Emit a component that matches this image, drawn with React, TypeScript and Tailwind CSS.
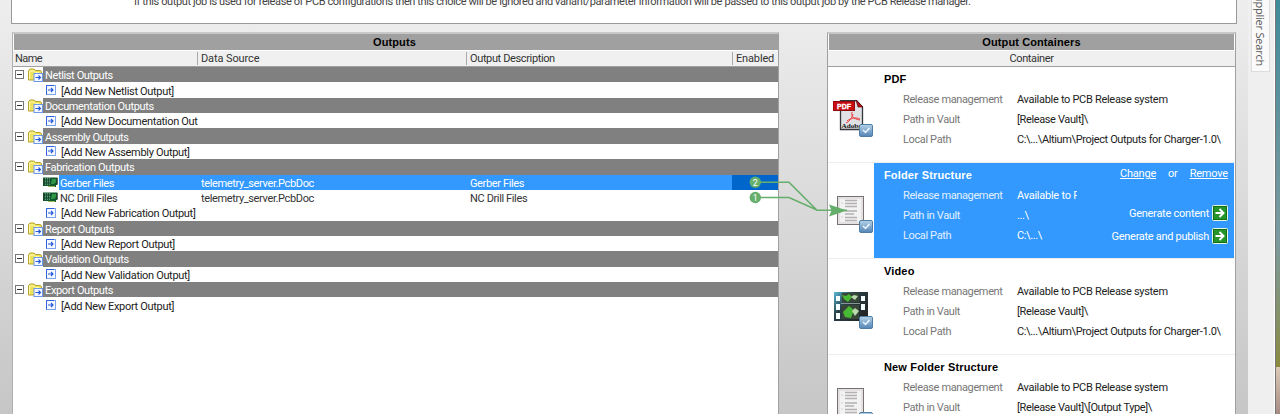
import React from 'react';

const groups = [
  { name: 'Netlist Outputs', add: '[Add New Netlist Output]' },
  { name: 'Documentation Outputs', add: '[Add New Documentation Out' },
  { name: 'Assembly Outputs', add: '[Add New Assembly Output]' },
  { name: 'Fabrication Outputs', add: '[Add New Fabrication Output]', files: ['Gerber Files', 'NC Drill Files'] },
  { name: 'Report Outputs', add: '[Add New Report Output]' },
  { name: 'Validation Outputs', add: '[Add New Validation Output]' },
  { name: 'Export Outputs', add: '[Add New Export Output]' },
];

function AddIcon({ size = 10 }: { size?: number }) {
  return (
    <svg width={size} height={size} viewBox="0 0 10 10" className="shrink-0">
      <rect x=".5" y=".5" width="9" height="9" fill="#f4f9ff" stroke="#7da2f0" />
      <path d="M.5 9.5V.5H8" fill="none" stroke="#2f62dc" />
      <path d="M2 5h5M5 3l2 2-2 2" fill="none" stroke="#2456d8" strokeWidth="1.1" />
    </svg>
  );
}

function Collapse() {
  return (
    <svg width="9" height="9" viewBox="0 0 9 9" className="shrink-0">
      <rect x=".5" y=".5" width="8" height="8" fill="#fff" stroke="#777" />
      <path d="M2 4.5h5" stroke="#333" />
    </svg>
  );
}

function FolderIcon() {
  return (
    <svg width="15" height="14" viewBox="0 0 15 14" className="shrink-0">
      <path d="M.5 12V2.500L2 1h4l1.500 1.500h5L13.500 4v8z" fill="#efe35c" stroke="#b5a32c" />
      <path d="M1.500 11V3h4l2 1.500H11" fill="none" stroke="#fff9b5" />
      <rect x="6" y="5.500" width="8.500" height="8" fill="#f4f9ff" stroke="#6c96e8" />
      <path d="M7.500 9.500h5M10.500 7.500l2 2-2 2" fill="none" stroke="#2456d8" strokeWidth="1.100" />
    </svg>
  );
}

function BoardIcon() {
  return (
    <svg width="15" height="11" viewBox="0 0 15 11" className="shrink-0">
      <path d="M0 .5h14.500V8H13v2H5V9H0z" fill="#12582e" />
      <path d="M2.500 1v7M4.500 1v7M6.500 1v7" stroke="#6fa98b" strokeWidth=".8" />
      <path d="M1 3h7M1 6h6" stroke="#173e2b" />
      <path d="M9 2h4v3l-2 2H8z" fill="#2f9648" />
      <path d="M5 9.500h7" stroke="#a0b65a" />
      <path d="M0 1v8M14 1v6" stroke="#26332a" />
    </svg>
  );
}

function CheckBadge() {
  return (
    <svg x="26" y="24" width="14" height="13" viewBox="0 0 14 13">
      <defs>
        <linearGradient id="badge" x2="0" y2="1">
          <stop stopColor="#b4d2ea" />
          <stop offset="1" stopColor="#5285b5" />
        </linearGradient>
      </defs>
      <rect x=".5" y=".5" width="13" height="12" rx="1.500" fill="url(#badge)" stroke="#527da3" />
      <path d="M4 6l2.500 2.500L10.500 4" fill="none" stroke="#edf7ff" strokeWidth="1.500" />
    </svg>
  );
}

type Kind = 'pdf' | 'folder' | 'video';

function ContainerIcon({ kind }: { kind: Kind }) {
  return (
    <svg width="42" height="38" viewBox="0 0 42 38">
      {kind === 'pdf' && (
        <g>
          <path d="M7.500 .5h16L29.500 7v22.500h-22z" fill="#dfe1e4" stroke="#34363b" strokeWidth="1.300" />
          <path d="M23 0l7 7h-5z" fill="#b50d12" stroke="#5f1012" strokeWidth=".7" />
          <rect x="0" y="1.500" width="21.500" height="9" fill="#c90e12" stroke="#8b0b0e" />
          <text x="4" y="9" fontSize="7.500" fontWeight="bold" fill="#fff" stroke="#fff" strokeWidth=".3" textLength="14" lengthAdjust="spacingAndGlyphs" className="font-['Liberation_Sans'] tracking-normal">PDF</text>
          <path d="M19 12c-1 4 1 7 8 8M20 14c-1 4-4 8-7 9M14 21c4-3 9-4 13-2" fill="none" stroke="#ed3b3b" />
          <text x="8.500" y="28" fontSize="7" fontWeight="bold" fill="#111" textLength="20" lengthAdjust="spacingAndGlyphs" className="font-['Liberation_Serif'] tracking-normal">Adobe</text>
        </g>
      )}
      {kind === 'folder' && (
        <g>
          <rect x="4.500" y=".5" width="26" height="28" fill="#f3f2f2" stroke="#777271" />
          <rect x="6" y="2" width="23" height="25" fill="none" stroke="#d5d1d0" />
          <path d="M12 4.500h12M12 7.500h12M12 10.500h12M12 15h12M12 18h9M12 21.500h12M12 24.500h12" stroke="#b3b1b1" strokeWidth="1.600" />
          <path d="M8 7h2M8 15h2M8 21h2" stroke="#d4d1d1" />
        </g>
      )}
      {kind === 'video' && (
        <g>
          <defs>
            <linearGradient id="film" x2="1" y2=".7">
              <stop stopColor="#57bada" />
              <stop offset=".4" stopColor="#294047" />
              <stop offset="1" stopColor="#242526" />
            </linearGradient>
          </defs>
          <rect x="1" y="0" width="34" height="29" fill="url(#film)" />
          <path d="M3 4h4v5H3zm0 8h4v6H3zm0 9h4v6H3zM28 4h4v5h-4zm0 8h4v6h-4z" fill="#f5ffff" />
          <path d="M9 1h17v9H9zm0 12h17v14H9z" fill="#374637" />
          <path d="M9 3l4 1 3-2 3 3-4 5-4-3zM10 20l6-6 5 4-3 8-6-1z" fill="#48b935" />
          <path d="M18 5l3-2 4 1-3 4zm1 14l3-3 4 3-4 5z" fill="#bbd9ae" />
          <path d="M8 11.500h19" stroke="#8a9690" />
        </g>
      )}
      <CheckBadge />
    </svg>
  );
}

function Go() {
  return (
    <svg width="16" height="16" viewBox="0 0 16 16" className="shrink-0">
      <rect x=".5" y=".5" width="15" height="15" rx="1" fill="#259529" stroke="#e5f6df" />
      <rect x="1.500" y="1.500" width="13" height="13" fill="none" stroke="#137016" />
      <path d="M3.500 8h8M7.500 4l4 4-4 4" fill="none" stroke="#fff" strokeWidth="2" />
    </svg>
  );
}

function OutputsPanel() {
  return (
    <section className="flex h-[382px] w-[767px] shrink-0 flex-col border-x border-t-2 border-t-[#c8c8c8] border-l-[#b0b0b0] border-r-[#a0a0a0] bg-white">
      <div className="ml-px flex h-4 shrink-0 items-center justify-center bg-[#a0a0a0] pr-[3px] font-['Liberation_Sans'] text-[11px] font-bold tracking-[0.1px]">Outputs</div>
      <div className="flex h-[17px] shrink-0 items-center border-b border-t border-b-[#a0a0a0] border-t-white bg-[#f0f0f0] text-[#333]">
        <span className="w-[184px] pl-0.5 tracking-[-0.6px]">Name</span>
        <span className="w-[269px] border-l border-[#aaa] pl-[3px] tracking-[-0.1px]">Data Source</span>
        <span className="w-[266px] border-l border-[#aaa] pl-[3px]">Output Description</span>
        <span className="border-l border-[#aaa] pl-[3px] tracking-[-0.15px]">Enabled</span>
      </div>
      {groups.map((g) => (
        <React.Fragment key={g.name}>
          <div className="flex h-[15.36px] shrink-0 items-center pl-0.5">
            <Collapse />
            <div className="ml-1 mt-px flex"><FolderIcon /></div>
            <div className="flex h-full flex-1 items-center bg-[#808080] pl-[2px] pt-[2px] text-white">{g.name}</div>
          </div>
          {g.files?.map((f, i) => (
            <div key={f} className="flex h-[15.36px] shrink-0 items-center pl-[30px]">
              <BoardIcon />
              <div className={i === 0 ? 'ml-px flex h-full flex-1 items-center bg-[#3399ff] text-white' : 'ml-px flex h-full flex-1 items-center text-[#333]'}>
                <span className="w-[142px] pl-[1px] pt-[2px]">{f}</span>
                <span className="w-[269px] pt-[2px]">telemetry_server.PcbDoc</span>
                <span className="w-[262px] pt-[2px]">{f}</span>
                <span className={i === 0 ? 'h-full flex-1 bg-[#0066cc]' : 'h-full flex-1'} />
              </div>
            </div>
          ))}
          <div className="flex h-[15.36px] shrink-0 items-center pl-[33px] text-[#222]">
            <AddIcon />
            <span className="pl-[5px] pt-[2px] tracking-[-0.32px]">{g.add}</span>
          </div>
        </React.Fragment>
      ))}
    </section>
  );
}

type Container = { title: string; kind: Kind; release: string; vault: string; path: string; selected?: boolean };

const containers: Container[] = [
  { title: 'PDF', kind: 'pdf', release: 'Available to PCB Release system', vault: '[Release Vault]\\', path: 'C:\\...\\Altium\\Project Outputs for Charger-1.0\\' },
  { title: 'Folder Structure', kind: 'folder', release: 'Available to P', vault: '...\\', path: 'C:\\...\\', selected: true },
  { title: 'Video', kind: 'video', release: 'Available to PCB Release system', vault: '[Release Vault]\\', path: 'C:\\...\\Altium\\Project Outputs for Charger-1.0\\' },
  { title: 'New Folder Structure', kind: 'folder', release: 'Available to PCB Release system', vault: '[Release Vault]\\[Output Type]\\', path: '' },
];

function ContainerItem({ item }: { item: Container }) {
  const on = item.selected;
  return (
    <div className="flex h-24 shrink-0 border-b border-[#eee]">
      <div className="w-[46px] shrink-0 pl-[5px] pt-[33px]"><ContainerIcon kind={item.kind} /></div>
      <div className={on ? 'mr-px flex flex-1 bg-[#3399ff] text-white' : 'flex flex-1 text-[#222]'}>
        <div className="w-[204px] shrink-0 pl-2.5 pt-[5px]">
          <h3 className={on ? "whitespace-nowrap font-['Liberation_Sans'] text-[11px] font-bold leading-[15px] tracking-[0.15px]" : "whitespace-nowrap font-['Liberation_Sans'] text-[11px] font-bold leading-[15px] tracking-[0.15px] text-black"}>{item.title}</h3>
          <dl className="grid grid-cols-[114px_auto] gap-0 pl-[19px] pt-[3px] leading-5">
            <dt className={on ? 'text-[#e2f0ff]' : 'text-[#777]'}>Release management</dt>
            <dd className={on ? 'w-[60px] overflow-hidden tracking-[-0.25px]' : 'w-52 tracking-[-0.3px]'}>{item.release}</dd>
            <dt className={on ? 'text-[#e2f0ff]' : 'text-[#777]'}>Path in Vault</dt>
            <dd>{item.vault}</dd>
            {item.path && <dt className={on ? 'text-[#e2f0ff]' : 'text-[#777]'}>Local Path</dt>}
            {item.path && <dd>{item.path}</dd>}
          </dl>
        </div>
        {on && (
          <div className="flex flex-1 flex-col items-end pr-1.5 pt-1">
            <div className="flex gap-3 leading-[14px] tracking-[-0.2px]">
              <span className="underline">Change</span><span>or</span><span className="underline">Remove</span>
            </div>
            <div className="mt-6 flex items-center gap-[3px]"><span className="tracking-[-0.25px]">Generate content</span><Go /></div>
            <div className="mt-[7px] flex items-center gap-[3px]"><span className="tracking-[-0.3px]">Generate and publish</span><Go /></div>
          </div>
        )}
      </div>
    </div>
  );
}

function ContainersPanel() {
  return (
    <section className="flex h-[382px] w-[409px] shrink-0 flex-col overflow-hidden border-x border-t-2 border-t-[#c8c8c8] border-x-[#a0a0a0] bg-white">
      <div className="mx-px flex h-4 shrink-0 items-center justify-center bg-[#a0a0a0] font-['Liberation_Sans'] text-[11px] font-bold tracking-[0.1px]">Output Containers</div>
      <div className="flex h-[17px] shrink-0 items-center justify-center border-b border-t border-b-[#a0a0a0] border-t-white bg-[#f0f0f0] text-[#333]">Container</div>
      {containers.map((c) => <ContainerItem key={c.title} item={c} />)}
    </section>
  );
}

function Connector() {
  return (
    <svg className="pointer-events-none absolute left-[745px] top-[172px]" width="110" height="50" viewBox="745 172 110 50">
      <g fill="none" stroke="#65ae6b" strokeWidth="1.600">
        <path d="M755 182.300h34l28 28h30M755 197.500h34l28 12.500" />
      </g>
      <path d="M829 204.500l18 6-18 6 2.500-6z" fill="#65ae6b" />
      <circle cx="755.300" cy="182.300" r="5.700" fill="#65ae6b" />
      <circle cx="755.300" cy="197.500" r="5.700" fill="#65ae6b" />
      <g fill="#fff" fontSize="9" textAnchor="middle" className="tracking-normal">
        <text x="755.300" y="185.500">2</text>
        <text x="755.300" y="200.700">1</text>
      </g>
    </svg>
  );
}

export default function App() {
  return (
    <div className="relative flex h-[414px] w-[1280px] overflow-hidden whitespace-nowrap bg-[#efefef] font-[Roboto,sans-serif] text-[11px] leading-[13px] tracking-[-0.37px] text-black">
      <main className="flex w-[1248px] shrink-0 flex-col bg-linear-to-b from-[#eeeeee] to-[#c6c6c6]">
        <div className="ml-[11px] h-6 w-[1226px] shrink-0 border-x border-b border-[#999] bg-white pl-[122px] text-[#444]">
          <p className="-mt-[5px] tracking-[-0.39px]">If this output job is used for release of PCB configurations then this choice will be ignored and variant/parameter information will be passed to this output job by the PCB Release manager.</p>
        </div>
        <div className="mt-2 flex gap-12 pl-3">
          <OutputsPanel />
          <ContainersPanel />
        </div>
      </main>
      <aside className="flex w-[27px] shrink-0 border-r border-white pl-[3px]">
        <div className="flex h-[72px] w-[19px] items-end justify-center border-x border-b border-[#ddd] bg-[#fafafa] pb-[5px] text-[#555]">
          <span className="font-['Open_Sans'] text-[11px] tracking-[-0.2px] [writing-mode:vertical-rl]">Supplier Search</span>
        </div>
      </aside>
      <div className="flex w-[5px] shrink-0 flex-col border-l border-[#777]">
        <div className="h-[367px] bg-linear-to-b from-[#3e8b9b] via-[#7b9a9f] via-65% to-[#8a8a3c]" />
        <div className="flex-1 bg-linear-to-b from-[#dccbb8] to-[#a68b84]" />
      </div>
      <Connector />
    </div>
  );
}
